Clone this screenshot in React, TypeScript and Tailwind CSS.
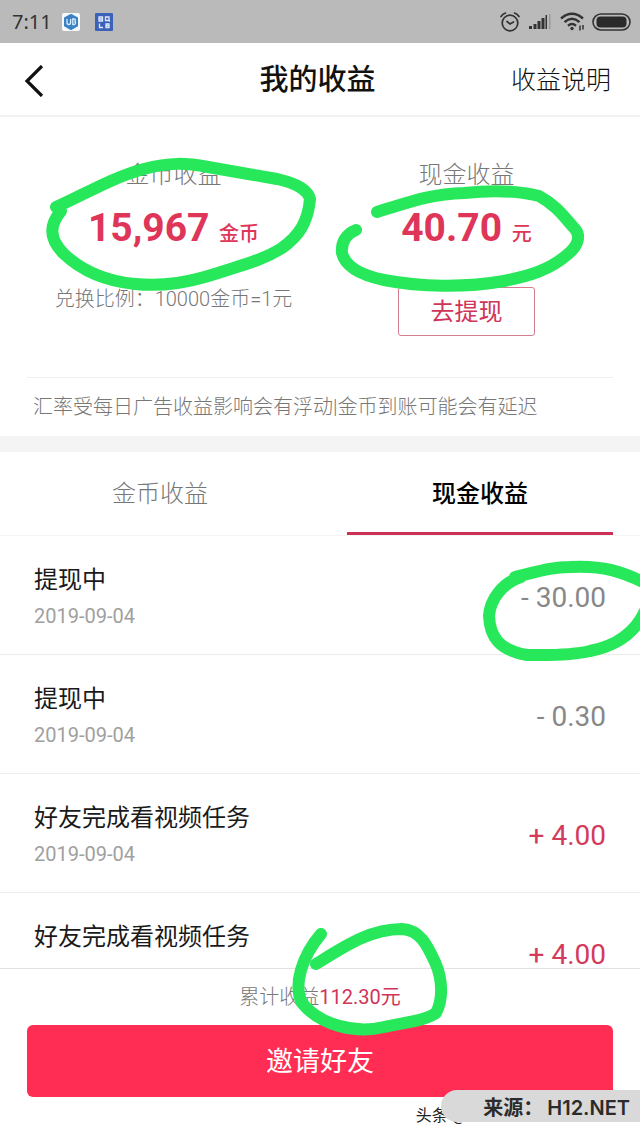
const records = [
  { title: "提现中", date: "2019-09-04", amount: "- 30.00", income: false },
  { title: "提现中", date: "2019-09-04", amount: "- 0.30", income: false },
  { title: "好友完成看视频任务", date: "2019-09-04", amount: "+ 4.00", income: true },
  { title: "好友完成看视频任务", date: "", amount: "+ 4.00", income: true },
];

function StatusBar() {
  return (
    <div className="flex h-[43px] shrink-0 items-center justify-between bg-[#bababa] pl-3 pr-[9px] text-[#333]">
      <div className="flex items-center">
        <span className="w-[50px] font-['Noto_Sans'] text-[20px]">7:11</span>
        <svg width="18" height="18" viewBox="0 0 18 18">
          <rect width="18" height="18" rx="2" fill="#f4f8fc" />
          <path d="M9 2l6 3.200v7.500L9 16l-6-3.300V5.200z" fill="#3a82c4" stroke="#3a82c4" strokeWidth="2" strokeLinejoin="round" />
          <path d="M5 6v3.500q0 2 1.800 2t1.800-2V6M10.800 6v5.500h1q1.800 0 1.800-1.500 0-1.200-1.200-1.300 1-.2 1-1.300 0-1.400-1.400-1.400z" fill="none" stroke="#d8ecff" strokeWidth="1.300" />
        </svg>
        <svg className="ml-[15px]" width="18" height="18" viewBox="0 0 18 18">
          <rect width="18" height="18" rx="1" fill="#3b62b8" />
          <path d="M4 4h3.500v4H4zM4 6h3.500M10.500 4h3.500v3.500h-3.500zM13 6.500l2 2M4.500 10.500v4h3.500M11 11h3v3.500h-3zM11 12.700h3" fill="none" stroke="#dfe8fb" strokeWidth="1.300" />
        </svg>
      </div>
      <div className="flex items-center">
        <svg width="22" height="22" viewBox="0 0 22 22" fill="none" stroke="#333" strokeWidth="1.700" strokeLinecap="round">
          <circle cx="11" cy="12" r="7.800" />
          <path d="M2 5.500Q3.500 3 6.500 2M20 5.500Q18.500 3 15.500 2M8 10.500l3 2.500 3.500-2" />
        </svg>
        <svg className="ml-2" width="22" height="18" viewBox="0 0 22 18" fill="#333">
          <rect x="0" y="13" width="3" height="3" />
          <rect x="4.500" y="11" width="3" height="5" />
          <rect x="8.500" y="8" width="3" height="8" />
          <rect x="12.500" y="5" width="3" height="11" />
          <rect x="16.500" y="2" width="1.500" height="14" />
          <rect x="20" y="1" width="1.500" height="15" fill="#999" />
        </svg>
        <svg className="ml-[9px]" width="25" height="20" viewBox="0 0 25 20" fill="none" stroke="#333" strokeWidth="2.400">
          <path d="M1 6.500Q12 -3 23 6.500M4.500 10.200Q12 3.500 19.500 10.200M8 13.700Q12 10.500 16 13.700" />
          <circle cx="12" cy="16.500" r="1.700" fill="#333" stroke="none" />
          <path d="M20 13.500v5M23 13v4.500" strokeWidth="1.500" />
        </svg>
        <svg className="ml-[7px]" width="39" height="18" viewBox="0 0 39 18">
          <rect x="1" y="1" width="37" height="16" rx="8" fill="none" stroke="#333" strokeWidth="1.600" />
          <rect x="4.500" y="3.500" width="30" height="11" rx="4" fill="#2a2a2a" />
        </svg>
      </div>
    </div>
  );
}

function Header() {
  return (
    <header className="grid h-[74px] shrink-0 grid-cols-[1fr_auto_1fr] items-center border-b-2 border-[#f2f2f2] pl-6 pr-[29px] pt-1">
      <button type="button" aria-label="返回" className="justify-self-start">
        <svg width="20" height="32" viewBox="0 0 20 32" fill="none" stroke="#111" strokeWidth="3.200">
          <path d="M18 1L3 16l15 15" />
        </svg>
      </button>
      <h1 className="text-[29px] font-medium text-[#111]">我的收益</h1>
      <a href="#rules" className="justify-self-end text-[25px] font-light text-[#111]">
        收益说明
      </a>
    </header>
  );
}

function Summary() {
  return (
    <section className="shrink-0 px-[27px] pt-10">
      <div className="grid h-[220px] grid-cols-2 text-center">
        <div>
          <p className="text-[24px] font-light leading-9 text-[#777]">金币收益</p>
          <p className="mt-3 text-[39px] font-bold leading-[46px] text-[#de3558]">
            15,967 <span className="text-[20px] font-medium">金币</span>
          </p>
          <p className="mt-[30px] text-[20px] font-light leading-6 text-[#777]">
            兑换比例：10000金币=1元
          </p>
        </div>
        <div>
          <p className="text-[24px] font-light leading-9 text-[#777]">现金收益</p>
          <p className="mt-3 text-[39px] font-bold leading-[46px] text-[#de3558]">
            40.70 <span className="text-[20px] font-medium">元</span>
          </p>
          <button
            type="button"
            className="mt-[30px] h-[49px] w-[137px] rounded-[3px] border border-[#d47c90] text-[24px] text-[#cf3558]"
          >
            去提现
          </button>
        </div>
      </div>
      <p className="border-t border-[#eee] px-[6px] pb-3 pt-3 text-[20px] font-light leading-[34px] text-[#777]">
        汇率受每日广告收益影响会有浮动|金币到账可能会有延迟
      </p>
    </section>
  );
}

function Tabs() {
  return (
    <div role="tablist" className="grid shrink-0 grid-cols-2 border-b border-[#f4f4f4] border-t-[16px] border-t-[#f4f4f4] text-[24px]">
      <button type="button" role="tab" aria-selected="false" className="mx-[27px] h-[83px] border-b-[3px] border-transparent pt-1 font-light text-[#777]">
        金币收益
      </button>
      <button type="button" role="tab" aria-selected="true" className="mx-[27px] h-[83px] border-b-[3px] border-[#cb3154] pt-1 font-medium text-black">
        现金收益
      </button>
    </div>
  );
}

function Records() {
  return (
    <ul className="min-h-0 flex-1 overflow-hidden">
      {records.map((item, index) => (
        <li
          key={index}
          className="flex h-[119px] items-start justify-between border-b border-[#ececec] px-[34px] pt-[26px]"
        >
          <div className="leading-9">
            <p className="text-[24px] text-[#1a1a1a]">{item.title}</p>
            {item.date && <p className="text-[20px] text-[#a0a0a0]">{item.date}</p>}
          </div>
          <span
            className={
              item.income
                ? "mt-[22px] text-[28px] leading-7 text-[#d33a5c]"
                : "mt-[22px] text-[28px] leading-7 text-[#888]"
            }
          >
            {item.amount}
          </span>
        </li>
      ))}
    </ul>
  );
}

function Footer() {
  return (
    <footer className="relative shrink-0 border-t border-[#e2e2e2] bg-white px-[27px] pb-[41px]">
      <p className="text-center text-[20px] font-light leading-[56px] text-[#777]">
        累计收益<span className="font-normal text-[#cf3558]">112.30元</span>
      </p>
      <button type="button" className="h-[72px] w-full rounded-md bg-[#ff2d54] pt-[2px] text-[27px] text-white">
        邀请好友
      </button>
      <span className="absolute bottom-3 right-[174px] text-[16px] leading-5 text-[#222]">头条 @</span>
      <div className="absolute bottom-4 right-0 flex h-8 w-[199px] items-center justify-end rounded-l-full bg-[#d9d9d9] pr-[10px] pt-1 font-['Inter','Noto_Sans_CJK_SC',sans-serif] text-[20px] font-semibold text-[#2b2b2b]">
        来源：<span className="ml-1">H12.NET</span>
      </div>
    </footer>
  );
}

// hand-drawn marker circles over the amounts
function Marks() {
  return (
    <svg
      className="pointer-events-none absolute inset-0 h-full w-full"
      viewBox="0 0 640 1138"
      preserveAspectRatio="none"
      fill="none"
      stroke="#27e85b"
      strokeWidth="12"
      strokeLinecap="round"
      strokeLinejoin="round"
    >
      <path d="M56 207C80 197 110 178 144 169C170 162 186 163 208 167L277 179C296 183 308 190 310 199C308 222 299 236 282 248C263 260 242 265 218 273C190 282 165 287 135 284C103 281 81 270 64 254C48 238 50 224 61 211" />
      <path d="M377 212C410 202 430 194 464 193C492 190 515 190 539 196C556 205 565 218 575 229C581 236 578 246 568 254C550 270 529 276 504 281C465 288 420 287 384 280C360 275 345 266 342 253C341 242 346 234 356 230" />
      <path d="M515 577C540 571 552 567 570 567C603 565 623 572 645 583M645 611C635 633 616 646 590 651C570 656 545 655 527 655C499 650 490 637 489 616C490 600 502 583 521 577" />
      <path d="M316 964C345 946 370 929 402 929C420 930 427 945 435 962C443 980 443 1000 436 1013C424 1021 407 1022 384 1027C355 1034 320 1025 302 1003C293 985 302 956 321 934" />
    </svg>
  );
}

export default function App() {
  return (
    <main className="relative flex h-screen flex-col overflow-hidden bg-white font-['Roboto','Noto_Sans_CJK_SC',sans-serif]">
      <StatusBar />
      <Header />
      <Summary />
      <Tabs />
      <Records />
      <Footer />
      <Marks />
    </main>
  );
}
